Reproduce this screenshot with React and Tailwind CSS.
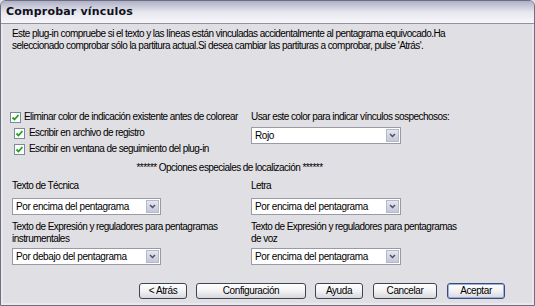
import React from "react";

const F = { fontFamily: '"Liberation Sans", Arial, sans-serif' };

function Check() {
  return (
    <span className="inline-flex h-[11px] w-[11px] shrink-0 items-center justify-center border border-[#7a8a99] bg-white">
      <svg width="9" height="9" viewBox="0 0 9 9">
        <path d="M1.5 4.5 L3.5 6.5 L7.5 2" fill="none" stroke="#21a121" strokeWidth="1.8" />
      </svg>
    </span>
  );
}

function Select({ value, w = "w-[150px]" }) {
  return (
    <div className={`flex h-[17px] ${w} border border-[#9a9aa6] bg-white`}>
      <div className="flex flex-1 items-center whitespace-nowrap pl-[3px] text-[10px] leading-none tracking-[-0.4px] text-black">{value}</div>
      <div className="m-[1px] flex w-[13px] items-center justify-center border border-[#b4b8c8] bg-gradient-to-b from-[#e4e6f0] to-[#c4c8d8]">
        <svg width="7" height="5" viewBox="0 0 7 5">
          <path d="M1 1 L3.5 3.5 L6 1" fill="none" stroke="#4d5160" strokeWidth="1.5" />
        </svg>
      </div>
    </div>
  );
}

function Btn({ children, w, def }) {
  return (
    <div
      className={`flex h-[16px] ${w} items-center justify-center whitespace-nowrap rounded-[3px] border ${def ? "border-[#3c4a78] shadow-[inset_0_0_0_1px_#9ab0e4]" : "border-[#3c4454]"} bg-gradient-to-b from-[#ffffff] via-[#f2f2f4] to-[#d8d8dc] text-[10px] leading-none tracking-[-0.4px] text-black`}
    >
      {children}
    </div>
  );
}

export default function App() {
  return (
    <div className="h-[306px] w-[535px] overflow-hidden bg-[#e0dfe3]" style={F}>
      <div className="flex h-[306px] flex-col rounded-t-[6px] border-x border-b border-t border-[#6e6e7e] bg-[#e0dfe3]">
        <div className="flex h-[23px] items-center rounded-t-[5px] border-b border-[#9090a0] bg-gradient-to-b from-[#aeb0c6] via-[#e6e6ee] to-[#f6f6fa] pl-[5px]">
          <span className="font-bold tracking-[0.2px] text-[#10101a]" style={{ fontFamily: '"DejaVu Sans", "Liberation Sans", sans-serif', fontSize: "11px" }}>
            Comprobar vínculos
          </span>
        </div>
        <div className="flex flex-1 flex-col whitespace-nowrap border-x-[2px] border-b-[2px] border-[#e8e8ee] px-[7px] pt-[4px] text-[10px] leading-[12px] tracking-[-0.55px] text-black">
          <p className="pl-[2px]">
            Este plug-in compruebe si el texto y las líneas están vinculadas accidentalmente al pentagrama equivocado.Ha
            <br />
            seleccionado comprobar sólo la partitura actual.Si desea cambiar las partituras a comprobar, pulse 'Atrás'.
          </p>
          <div className="mt-[57px] flex">
            <div className="flex w-[241px] flex-col">
              <div className="flex h-[16px] items-center gap-[3px]">
                <Check />
                <span>Eliminar color de indicación existente antes de colorear</span>
              </div>
              <div className="flex h-[16px] items-center gap-[4px] pl-[4px]">
                <Check />
                <span>Escribir en archivo de registro</span>
              </div>
              <div className="flex h-[16px] items-center gap-[4px] pl-[4px]">
                <Check />
                <span>Escribir en ventana de seguimiento del plug-in</span>
              </div>
            </div>
            <div className="flex flex-col">
              <div className="flex h-[16px] items-center">Usar este color para indicar vínculos sospechosos:</div>
              <div className="mt-[2px]">
                <Select value="Rojo" />
              </div>
            </div>
          </div>
          <div className="mt-[3px] flex h-[16px] items-center justify-center pr-[76px]">
            ****** Opciones especiales de localización ******
          </div>
          <div className="mt-[4px] grid grid-cols-[241px_1fr]">
            <div className="flex flex-col pl-[2px]">
              <div className="flex h-[12px] items-center">Texto de Técnica</div>
              <div className="mt-[6px]">
                <Select value="Por encima del pentagrama" w="w-[149px]" />
              </div>
              <div className="mt-[6px] h-[24px]">
                Texto de Expresión y reguladores para pentagramas
                <br />
                instrumentales
              </div>
              <div className="mt-[3px]">
                <Select value="Por debajo del pentagrama" w="w-[149px]" />
              </div>
            </div>
            <div className="flex flex-col">
              <div className="flex h-[12px] items-center">Letra</div>
              <div className="mt-[6px]">
                <Select value="Por encima del pentagrama" />
              </div>
              <div className="mt-[6px] h-[24px]">
                Texto de Expresión y reguladores para pentagramas
                <br />
                de voz
              </div>
              <div className="mt-[3px]">
                <Select value="Por encima del pentagrama" />
              </div>
            </div>
          </div>
          <div className="mt-[18px] flex items-center pl-[129px]">
            <Btn w="w-[48px]">&lt; Atrás</Btn>
            <div className="ml-[9px]">
              <Btn w="w-[110px]">Configuración</Btn>
            </div>
            <div className="ml-[9px]">
              <Btn w="w-[48px]">Ayuda</Btn>
            </div>
            <div className="ml-[10px]">
              <Btn w="w-[64px]">Cancelar</Btn>
            </div>
            <div className="ml-[10px]">
              <Btn w="w-[58px]" def>Aceptar</Btn>
            </div>
          </div>
        </div>
      </div>
    </div>
  );
}
